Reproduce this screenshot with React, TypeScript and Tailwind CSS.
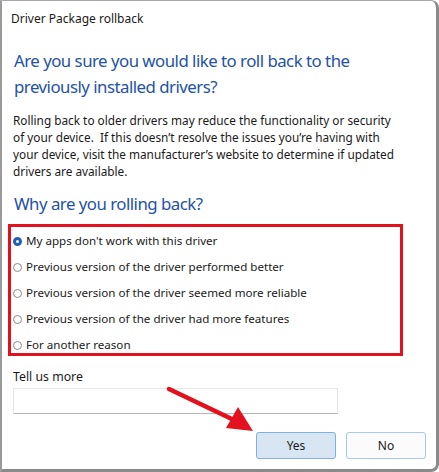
import React from "react";

const reasons = [
  "My apps don't work with this driver",
  "Previous version of the driver performed better",
  "Previous version of the driver seemed more reliable",
  "Previous version of the driver had more features",
  "For another reason",
];

export default function App() {
  return (
    <div className="w-[439px] h-[472px] bg-white relative overflow-hidden" style={{ fontFamily: '"Noto Sans", "Open Sans", sans-serif' }}>
      <div className="w-[439px] h-[472px] border-l-2 border-t border-r-[3px] border-b-[3px] border-l-[#9a9a9a] border-t-[#a8a8a8] border-r-[#8a8a8a] border-b-[#8a8a8a] rounded-tr-lg rounded-br-lg bg-white flex flex-col">
        <div className="pl-[9px] pt-[9px] text-[12px] leading-[18px] text-[#1a1a1a]">Driver Package rollback</div>
        <div className="pl-[12px] pr-4 mt-[20px] text-[16.8px] leading-[26px] tracking-[-0.5px] text-[#2352a6] whitespace-nowrap">
          Are you sure you would like to roll back to the<br />previously installed drivers?
        </div>
        <div className="pl-[11px] pr-[10px] mt-[12px] text-[11.8px] leading-[17px] text-[#1a1a1a] whitespace-nowrap">
          Rolling back to older drivers may reduce the functionality or security<br />
          of your device.&nbsp; If this doesn’t resolve the issues you’re having with<br />
          your device, visit the manufacturer’s website to determine if updated<br />
          drivers are available.
        </div>
        <div className="pl-[12px] mt-[11px] text-[16.8px] leading-[26px] tracking-[-0.5px] text-[#2352a6]">Why are you rolling back?</div>
        <div className="ml-[6px] mt-[7px] w-[395px] h-[132px] shrink-0 border-[3px] border-[#e3101e] pt-[4px] pl-[2px] flex flex-col gap-[6px]">
          {reasons.map((r, i) => (
            <div key={r} className="h-[20px] shrink-0 flex items-center gap-[4px] text-[11.6px] text-[#1a1a1a]">
              {i === 0 ? (
                <span className="w-[9px] h-[9px] rounded-full border-[3px] border-[#1f5fb8] bg-white shrink-0" />
              ) : (
                <span className="w-[9px] h-[9px] rounded-full border border-[#8a8a8a] bg-white shrink-0" />
              )}
              <span>{r}</span>
            </div>
          ))}
        </div>
        <div className="pl-[11px] mt-[12px] text-[12.3px] leading-[18px] text-[#1a1a1a]">Tell us more</div>
        <div className="ml-[11px] mt-[2px] w-[325px] h-[26px] shrink-0 border border-[#e6e6e6] border-b-[#b5b5b5] bg-white" />
        <div className="flex justify-end gap-[10px] pr-[10px] mt-[18px]">
          <button className="w-[80px] h-[27px] rounded-[3px] border border-[#7fb0e0] bg-[#d8e6f3] text-[12px] text-[#1a1a1a]">Yes</button>
          <button className="w-[80px] h-[27px] rounded-[3px] border border-[#a9c8e8] bg-[#fbfbfb] text-[12px] text-[#1a1a1a]">No</button>
        </div>
      </div>
      <svg className="absolute left-0 top-0 pointer-events-none" width="439" height="472">
        <line x1="169" y1="389" x2="236" y2="421" stroke="#e3101e" strokeWidth="4.5" strokeLinecap="round" />
        <polygon points="253,431 226,428 238,407" fill="#e3101e" />
      </svg>
    </div>
  );
}
